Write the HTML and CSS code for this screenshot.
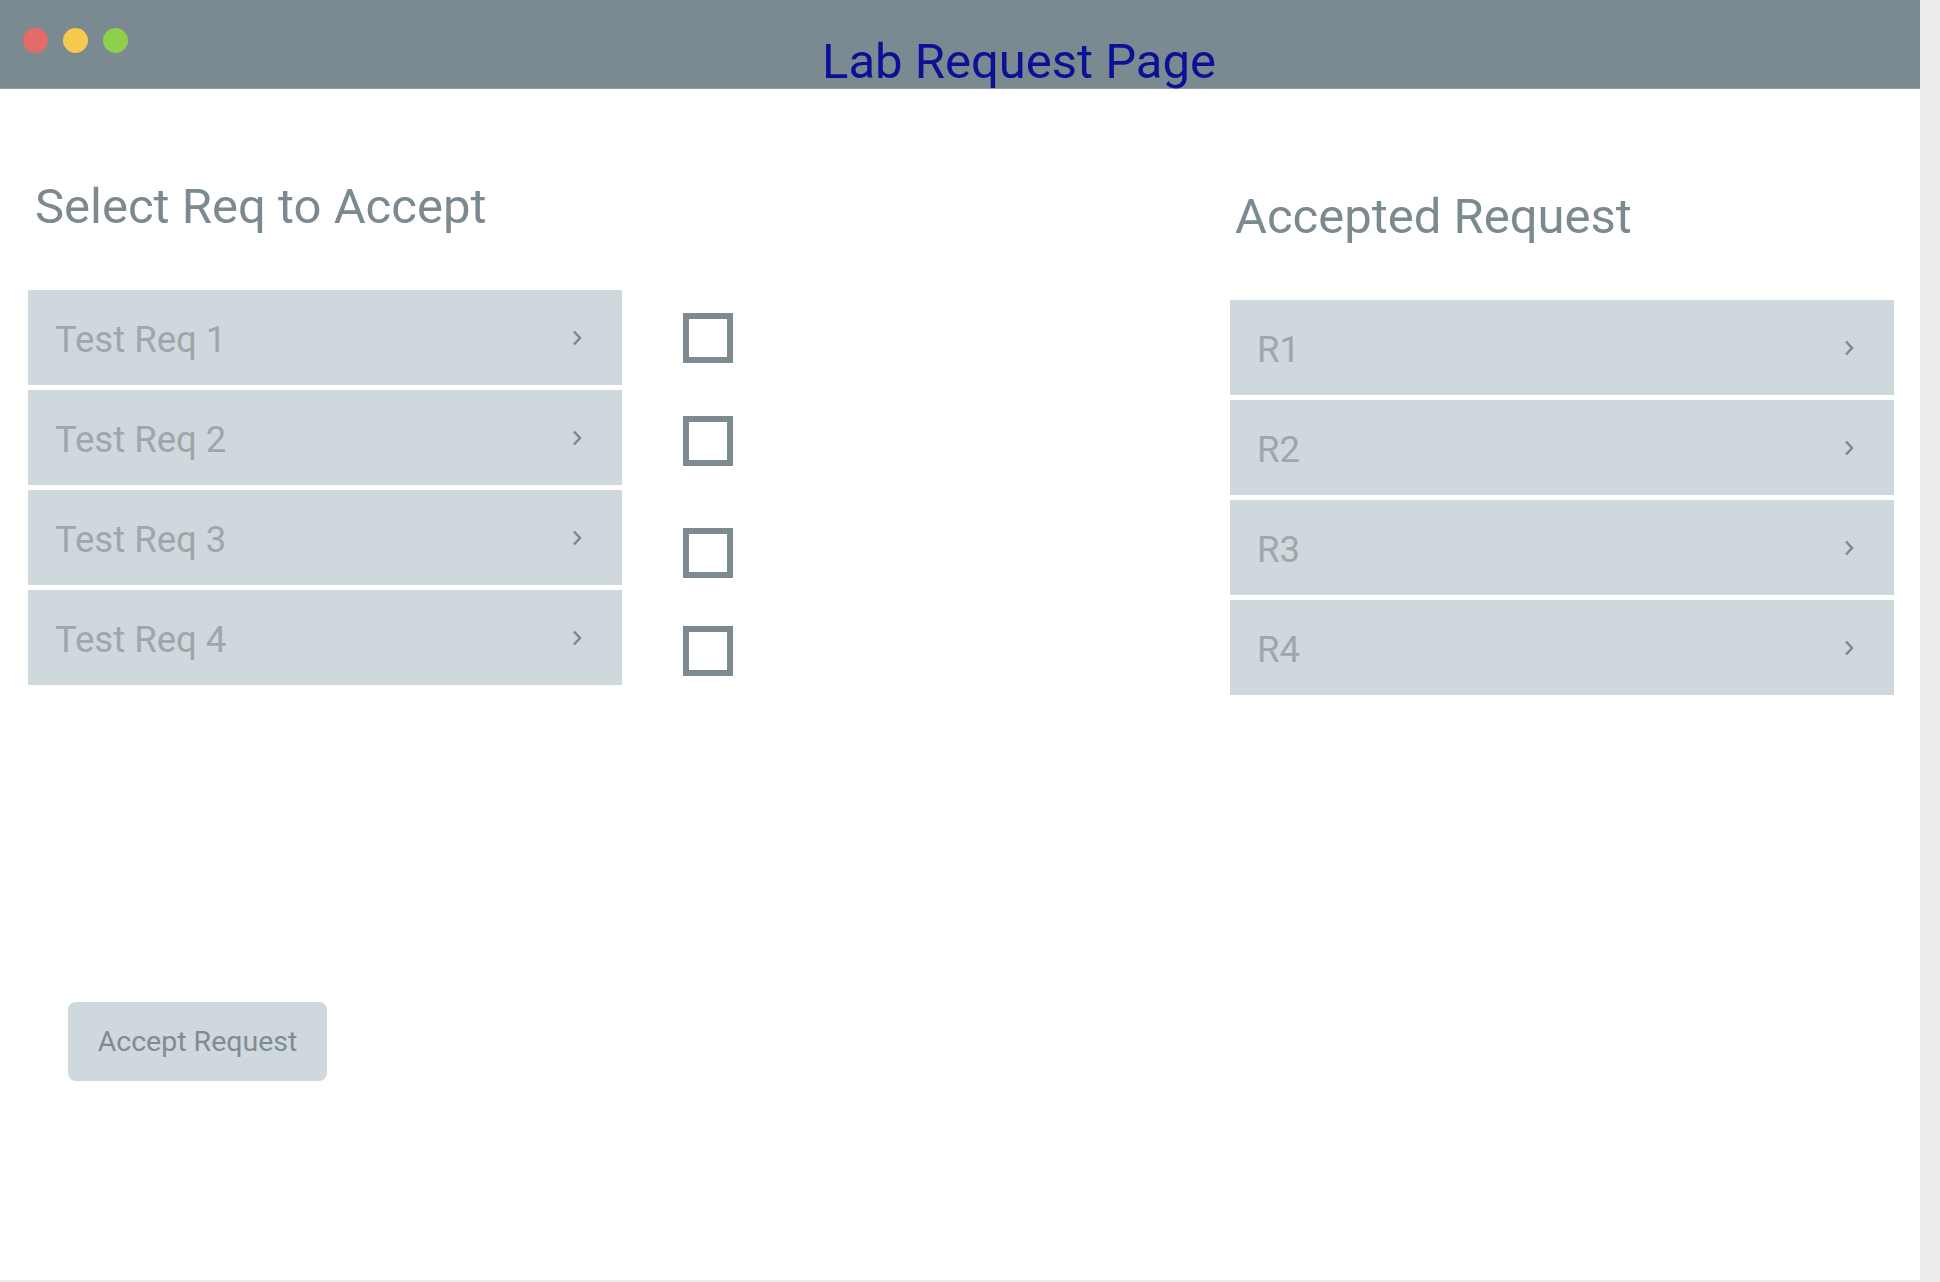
FILE: index.html
```html
<!DOCTYPE html>
<html lang="en">
<head>
<meta charset="utf-8">
<title>Lab Request Page</title>
<link rel="stylesheet" href="styles.css">
</head>
<body>
<div class="window">
  <header class="titlebar">
    <div class="lights">
      <span class="light light-red"></span>
      <span class="light light-yellow"></span>
      <span class="light light-green"></span>
    </div>
    <h1 class="title">Lab Request Page</h1>
  </header>
  <main class="content">
    <section class="pending">
      <h2 class="heading">Select Req to Accept</h2>
      <ul class="list">
        <li class="item"><span class="label">Test Req 1</span><svg class="chev" viewBox="0 0 10 16" width="10" height="16"><polyline points="2,1.5 8,8 2,14.5"/></svg></li>
        <li class="item"><span class="label">Test Req 2</span><svg class="chev" viewBox="0 0 10 16" width="10" height="16"><polyline points="2,1.5 8,8 2,14.5"/></svg></li>
        <li class="item"><span class="label">Test Req 3</span><svg class="chev" viewBox="0 0 10 16" width="10" height="16"><polyline points="2,1.5 8,8 2,14.5"/></svg></li>
        <li class="item"><span class="label">Test Req 4</span><svg class="chev" viewBox="0 0 10 16" width="10" height="16"><polyline points="2,1.5 8,8 2,14.5"/></svg></li>
      </ul>
      <button class="accept-btn" type="button">Accept Request</button>
    </section>
    <div class="checks">
      <span class="check check-1"></span>
      <span class="check check-2"></span>
      <span class="check check-3"></span>
      <span class="check check-4"></span>
    </div>
    <section class="accepted">
      <h2 class="heading">Accepted Request</h2>
      <ul class="list">
        <li class="item"><span class="label">R1</span><svg class="chev" viewBox="0 0 10 16" width="10" height="16"><polyline points="2,1.5 8,8 2,14.5"/></svg></li>
        <li class="item"><span class="label">R2</span><svg class="chev" viewBox="0 0 10 16" width="10" height="16"><polyline points="2,1.5 8,8 2,14.5"/></svg></li>
        <li class="item"><span class="label">R3</span><svg class="chev" viewBox="0 0 10 16" width="10" height="16"><polyline points="2,1.5 8,8 2,14.5"/></svg></li>
        <li class="item"><span class="label">R4</span><svg class="chev" viewBox="0 0 10 16" width="10" height="16"><polyline points="2,1.5 8,8 2,14.5"/></svg></li>
      </ul>
    </section>
  </main>
</div>
</body>
</html>
```

FILE: styles.css
```css
* { box-sizing: border-box; }

html, body {
  margin: 0;
  padding: 0;
  background: #ececec;
  font-family: Roboto, "Liberation Sans", Arial, sans-serif;
}

.window {
  width: 1920px;
  height: 1280px;
  background: #ffffff;
  display: flex;
  flex-direction: column;
}

.titlebar {
  height: 89px;
  background: #7b8a91;
  display: flex;
  align-items: flex-start;
  flex-shrink: 0;
  border-bottom: 1px solid #8e9aa0;
}

.lights {
  display: flex;
  gap: 15px;
  padding-left: 23px;
  padding-top: 28px;
}

.light {
  width: 25px;
  height: 25px;
  border-radius: 50%;
  display: block;
}
.light-red { background: #e36b68; }
.light-yellow { background: #f7c94f; }
.light-green { background: #8fd04a; }

.title {
  margin: 33px 0 0 694px;
  font-size: 49px;
  line-height: 57px;
  font-weight: 400;
  color: #0b1196;
  white-space: nowrap;
}

.content {
  display: flex;
  align-items: flex-start;
  flex: 1;
}

.heading {
  margin: 0 0 55px 0;
  font-size: 49px;
  line-height: 56px;
  font-weight: 400;
  color: #7b8a91;
  white-space: nowrap;
}

.pending {
  margin-left: 28px;
  width: 594px;
  padding-top: 90px;
  display: flex;
  flex-direction: column;
  align-items: flex-start;
}
.pending .heading { padding-left: 7px; }

.list {
  list-style: none;
  margin: 0;
  padding: 0;
  width: 100%;
  display: flex;
  flex-direction: column;
  gap: 5px;
}

.item {
  height: 95px;
  background: #cfd8dc;
  display: flex;
  align-items: center;
  justify-content: space-between;
  padding: 0 40px 0 27px;
  font-size: 36.5px;
  color: #9ea7ab;
}

.label {
  padding-top: 3px;
}

.chev {
  display: block;
  fill: none;
  stroke: #828688;
  stroke-width: 2.4;
}

.accept-btn {
  margin: 317px 0 0 40px;
  width: 259px;
  height: 79px;
  border: none;
  border-radius: 8px;
  background: #cfd8dc;
  color: #7f8c92;
  font-family: inherit;
  font-size: 28.5px;
  padding: 0;
}

.checks {
  margin-left: 61px;
  padding-top: 224px;
  display: flex;
  flex-direction: column;
}

.check {
  display: block;
  width: 50px;
  height: 50px;
  border: 6px solid #7d8a90;
  background: #ffffff;
}
.check-2 { margin-top: 53px; }
.check-3 { margin-top: 62px; }
.check-4 { margin-top: 48px; }

.accepted {
  margin-left: auto;
  margin-right: 26px;
  width: 664px;
  padding-top: 100px;
}
.accepted .heading { padding-left: 5px; }
```
